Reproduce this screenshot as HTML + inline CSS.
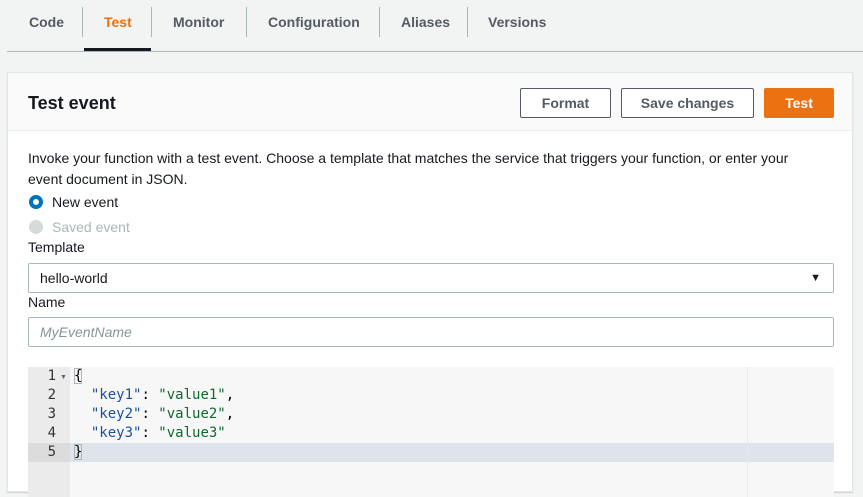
<!DOCTYPE html>
<html><head><style>
*{box-sizing:border-box;margin:0;padding:0}
body{width:863px;height:487px;overflow:hidden;background:#f2f3f3;font-family:"Liberation Sans",Arial,sans-serif;color:#16191f;position:relative}
.tab{position:absolute;top:14px;font-size:14px;font-weight:bold;color:#545b64}
.sep{position:absolute;top:7px;width:1px;height:30px;background:#aab7b8}
.card{position:absolute;left:7px;top:72px;width:846px;height:420px;background:#fff;border:1px solid #e4e6e6;box-shadow:0 1px 1px rgba(0,0,0,.15)}
.hdr{position:absolute;left:0;top:0;right:0;height:58px;background:#fafafa;border-bottom:1px solid #eaeded}
.btn{position:absolute;top:15px;height:30px;border:1px solid #545b64;border-radius:2px;background:#fff;font-size:14px;font-weight:bold;color:#545b64;text-align:center;line-height:28px}
.t{position:absolute;font-size:14px}
.inp{position:absolute;left:20px;width:806px;height:30px;border:1px solid #aab7b8;border-radius:2px;background:#fff;font-size:14px;line-height:28px;padding-left:11px}
.code{font-family:"DejaVu Sans Mono","Liberation Mono",monospace;font-size:14px;position:absolute;line-height:19px}
.br{outline:1px solid #b0b4bb;outline-offset:-1px}
</style></head><body>
<div class="tab" style="left:29px">Code</div>
<div class="sep" style="left:82px"></div>
<div class="tab" style="left:104px;color:#ec7211">Test</div>
<div style="position:absolute;left:84px;top:48px;width:67px;height:3px;background:#16191f"></div>
<div class="sep" style="left:151px"></div>
<div class="tab" style="left:173px">Monitor</div>
<div class="sep" style="left:246px"></div>
<div class="tab" style="left:268px">Configuration</div>
<div class="sep" style="left:379px"></div>
<div class="tab" style="left:401px">Aliases</div>
<div class="sep" style="left:467px"></div>
<div class="tab" style="left:488px">Versions</div>
<div style="position:absolute;left:7px;top:51px;right:0;height:1px;background:#aab7b8"></div>

<div class="card">
<div class="hdr">
<div style="position:absolute;left:20px;top:20px;font-size:18px;font-weight:bold">Test event</div>
<div class="btn" style="left:512px;width:91px">Format</div>
<div class="btn" style="left:613px;width:133px">Save changes</div>
<div class="btn" style="left:756px;width:70px;background:#ec7211;border-color:#ec7211;color:#fff">Test</div>
</div>
<div class="t" style="left:20px;top:75px;line-height:21px;width:775px">Invoke your function with a test event. Choose a template that matches the service that triggers your function, or enter your event document in JSON.</div>
<div style="position:absolute;left:21px;top:122px;width:14px;height:14px;border-radius:50%;border:4px solid #0073bb;background:#fff"></div>
<div class="t" style="left:44px;top:121px">New event</div>
<div style="position:absolute;left:21px;top:147px;width:14px;height:14px;border-radius:50%;background:#d5dbdb"></div>
<div class="t" style="left:44px;top:146px;color:#aab7b8">Saved event</div>
<div class="t" style="left:20px;top:166px">Template</div>
<div class="inp" style="top:190px">hello-world<span style="position:absolute;right:12px;top:0;font-size:11px;color:#16191f">&#9660;</span></div>
<div class="t" style="left:20px;top:221px">Name</div>
<div class="inp" style="top:244px;color:#879596;font-style:italic">MyEventName</div>
<div style="position:absolute;left:20px;top:294px;width:806px;height:130px;background:#f7f7f7">
<div style="position:absolute;left:0;top:0;width:42px;height:130px;background:#ebebeb"></div>
<div style="position:absolute;left:0;top:76px;width:42px;height:19px;background:#dcdcdc"></div>
<div style="position:absolute;left:42px;top:76px;right:0;height:19px;background:#dfe4ec"></div>
<div style="position:absolute;left:719px;top:0;width:1px;height:130px;background:#e8e8e8"></div>
<div class="code" style="left:0;top:0;width:28px;text-align:right;color:#333">1<br>2<br>3<br>4<br>5</div>
<div style="position:absolute;left:32px;top:7px;font-size:7px;color:#666">&#9660;</div>
<div class="code" style="left:46px;top:0;color:#000;white-space:pre"><span class="br">{</span>
  <span style="color:#1a4f9c">"key1"</span>: <span style="color:#0e6a2f">"value1"</span>,
  <span style="color:#1a4f9c">"key2"</span>: <span style="color:#0e6a2f">"value2"</span>,
  <span style="color:#1a4f9c">"key3"</span>: <span style="color:#0e6a2f">"value3"</span>
<span class="br">}</span></div>
</div>
</div>
</body></html>
